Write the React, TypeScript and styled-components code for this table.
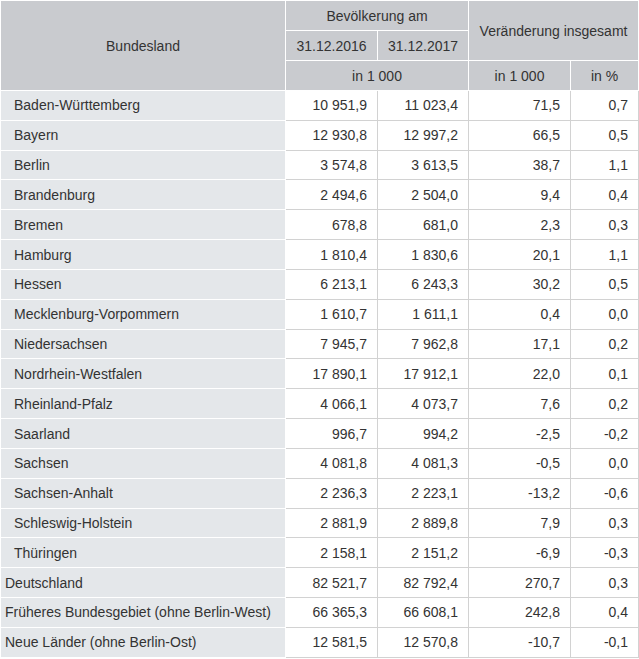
import React from "react";
import styled, { createGlobalStyle } from "styled-components";

const Global = createGlobalStyle`
  html, body { margin: 0; padding: 0; background: #fff; }
  body { font-family: "Liberation Sans", Arial, sans-serif; }
`;

const Table = styled.table`
  width: 638px;
  border-collapse: collapse;
  table-layout: fixed;
  font-family: "Liberation Sans", Arial, sans-serif;
  font-size: 14px;
  color: #333;
`;

const HeadRow = styled.tr`
  height: 30px;
`;

const Th = styled.th`
  background: #c9cbcf;
  border: 1px solid #fff;
  font-weight: normal;
  text-align: center;
  vertical-align: middle;
  padding: 0 4px;
  color: #333;
`;

const BodyRow = styled.tr`
  height: 29.83px;
`;

const NameCell = styled.td<{ $indent: boolean }>`
  background: #e4e7ea;
  border: 1px solid #fff;
  padding: 0 0 0 ${(p) => (p.$indent ? "13px" : "4px")};
  white-space: nowrap;
  text-align: left;
  vertical-align: middle;
`;

const NumCell = styled.td`
  background: #fff;
  border: 1px solid #d2d2d2;
  padding: 0 10px 0 0;
  text-align: right;
  vertical-align: middle;
  white-space: nowrap;
`;

type Row = [string, string, string, string, string, boolean];

const rows: Row[] = [
  ["Baden-Württemberg", "10 951,9", "11 023,4", "71,5", "0,7", true],
  ["Bayern", "12 930,8", "12 997,2", "66,5", "0,5", true],
  ["Berlin", "3 574,8", "3 613,5", "38,7", "1,1", true],
  ["Brandenburg", "2 494,6", "2 504,0", "9,4", "0,4", true],
  ["Bremen", "678,8", "681,0", "2,3", "0,3", true],
  ["Hamburg", "1 810,4", "1 830,6", "20,1", "1,1", true],
  ["Hessen", "6 213,1", "6 243,3", "30,2", "0,5", true],
  ["Mecklenburg-Vorpommern", "1 610,7", "1 611,1", "0,4", "0,0", true],
  ["Niedersachsen", "7 945,7", "7 962,8", "17,1", "0,2", true],
  ["Nordrhein-Westfalen", "17 890,1", "17 912,1", "22,0", "0,1", true],
  ["Rheinland-Pfalz", "4 066,1", "4 073,7", "7,6", "0,2", true],
  ["Saarland", "996,7", "994,2", "-2,5", "-0,2", true],
  ["Sachsen", "4 081,8", "4 081,3", "-0,5", "0,0", true],
  ["Sachsen-Anhalt", "2 236,3", "2 223,1", "-13,2", "-0,6", true],
  ["Schleswig-Holstein", "2 881,9", "2 889,8", "7,9", "0,3", true],
  ["Thüringen", "2 158,1", "2 151,2", "-6,9", "-0,3", true],
  ["Deutschland", "82 521,7", "82 792,4", "270,7", "0,3", false],
  ["Früheres Bundesgebiet (ohne Berlin-West)", "66 365,3", "66 608,1", "242,8", "0,4", false],
  ["Neue Länder (ohne Berlin-Ost)", "12 581,5", "12 570,8", "-10,7", "-0,1", false],
];

export default function App() {
  return (
    <>
      <Global />
      <Table>
        <colgroup>
          <col style={{ width: 285 }} />
          <col style={{ width: 92 }} />
          <col style={{ width: 91 }} />
          <col style={{ width: 102 }} />
          <col style={{ width: 68 }} />
        </colgroup>
        <thead>
          <HeadRow>
            <Th rowSpan={3}>Bundesland</Th>
            <Th colSpan={2}>Bevölkerung am</Th>
            <Th colSpan={2} rowSpan={2}>Veränderung insgesamt</Th>
          </HeadRow>
          <HeadRow>
            <Th>31.12.2016</Th>
            <Th>31.12.2017</Th>
          </HeadRow>
          <HeadRow>
            <Th colSpan={2}>in 1 000</Th>
            <Th>in 1 000</Th>
            <Th>in %</Th>
          </HeadRow>
        </thead>
        <tbody>
          {rows.map((r) => (
            <BodyRow key={r[0]}>
              <NameCell $indent={r[5]}>{r[0]}</NameCell>
              <NumCell>{r[1]}</NumCell>
              <NumCell>{r[2]}</NumCell>
              <NumCell>{r[3]}</NumCell>
              <NumCell>{r[4]}</NumCell>
            </BodyRow>
          ))}
        </tbody>
      </Table>
    </>
  );
}
